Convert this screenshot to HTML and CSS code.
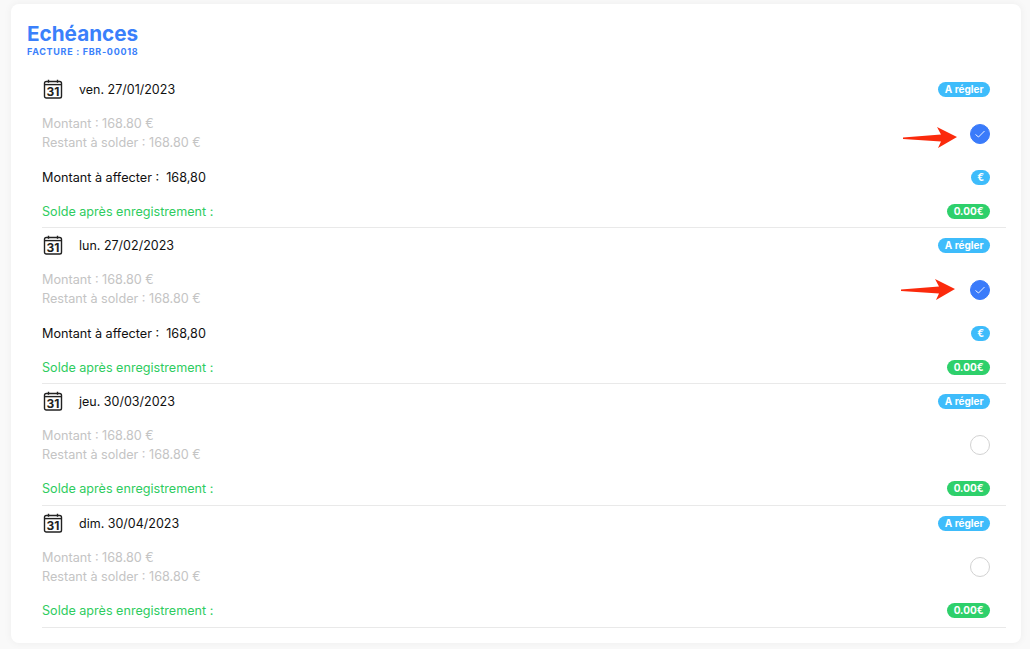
FILE: index.html
```html
<!DOCTYPE html>
<html lang="fr">
<head>
    <meta charset="UTF-8">
    <title>Echéances</title>
    <link rel="stylesheet" href="styles.css">
</head>
<body>
    <svg class="defs" width="0" height="0">
        <symbol id="cal" viewBox="0 0 20 20">
            <rect x="1.500" y="2.500" width="17" height="16.500" rx="1.800" fill="none" stroke="#222" stroke-width="1.400"/>
            <path d="M1.500 5.600h17" stroke="#222" stroke-width="1.400"/>
            <path d="M5.500 0.800v3M14.500 0.800v3" stroke="#222" stroke-width="1.400"/>
        </symbol>
        <symbol id="arrow" viewBox="0 0 56 22">
            <path d="M1 10.500 39 7.500 35 0 55 10 36 21 39 14.500 1 12z" fill="#fb2a0c"/>
        </symbol>
    </svg>

    <div class="card">
        <div class="head">
            <h1>Echéances</h1>
            <div class="sub">FACTURE : FBR-00018</div>
        </div>

        <div class="item">
            <div class="row date-row">
                <svg class="cal" viewBox="0 0 20 20"><use href="#cal"/><text x="10" y="17" text-anchor="middle" class="cal-num">31</text></svg>
                <span class="date">ven. 27/01/2023</span>
                <span class="badge blue">A régler</span>
            </div>
            <div class="row amounts">
                <div class="lines">
                    <div>Montant : 168.80 €</div>
                    <div>Restant à solder : 168.80 €</div>
                </div>
                <span class="check on">
                    <svg class="tick" viewBox="0 0 12 10"><path d="M1.500 5.500 4.500 8 10.500 2" fill="none" stroke="#fff" stroke-width="0.900"/></svg>
                    <svg class="arrow"><use href="#arrow"/></svg>
                </span>
            </div>
            <div class="row">
                <span class="assign">Montant à affecter :&nbsp; 168,80</span>
                <span class="badge blue euro">€</span>
            </div>
            <div class="row">
                <span class="solde">Solde après enregistrement :</span>
                <span class="badge green">0.00€</span>
            </div>
        </div>

        <div class="item">
            <div class="row date-row">
                <svg class="cal" viewBox="0 0 20 20"><use href="#cal"/><text x="10" y="17" text-anchor="middle" class="cal-num">31</text></svg>
                <span class="date">lun. 27/02/2023</span>
                <span class="badge blue">A régler</span>
            </div>
            <div class="row amounts">
                <div class="lines">
                    <div>Montant : 168.80 €</div>
                    <div>Restant à solder : 168.80 €</div>
                </div>
                <span class="check on">
                    <svg class="tick" viewBox="0 0 12 10"><path d="M1.500 5.500 4.500 8 10.500 2" fill="none" stroke="#fff" stroke-width="0.900"/></svg>
                    <svg class="arrow second"><use href="#arrow"/></svg>
                </span>
            </div>
            <div class="row">
                <span class="assign">Montant à affecter :&nbsp; 168,80</span>
                <span class="badge blue euro">€</span>
            </div>
            <div class="row">
                <span class="solde">Solde après enregistrement :</span>
                <span class="badge green">0.00€</span>
            </div>
        </div>

        <div class="item short">
            <div class="row date-row">
                <svg class="cal" viewBox="0 0 20 20"><use href="#cal"/><text x="10" y="17" text-anchor="middle" class="cal-num">31</text></svg>
                <span class="date">jeu. 30/03/2023</span>
                <span class="badge blue">A régler</span>
            </div>
            <div class="row amounts">
                <div class="lines">
                    <div>Montant : 168.80 €</div>
                    <div>Restant à solder : 168.80 €</div>
                </div>
                <span class="check"></span>
            </div>
            <div class="row">
                <span class="solde">Solde après enregistrement :</span>
                <span class="badge green">0.00€</span>
            </div>
        </div>

        <div class="item short">
            <div class="row date-row">
                <svg class="cal" viewBox="0 0 20 20"><use href="#cal"/><text x="10" y="17" text-anchor="middle" class="cal-num">31</text></svg>
                <span class="date">dim. 30/04/2023</span>
                <span class="badge blue">A régler</span>
            </div>
            <div class="row amounts">
                <div class="lines">
                    <div>Montant : 168.80 €</div>
                    <div>Restant à solder : 168.80 €</div>
                </div>
                <span class="check"></span>
            </div>
            <div class="row">
                <span class="solde">Solde après enregistrement :</span>
                <span class="badge green">0.00€</span>
            </div>
        </div>
    </div>
</body>
</html>
```

FILE: styles.css
```css
html, body {
    height: 100%;
}

body {
    margin: 0;
    padding: 4px 9px 0 11px;
    box-sizing: border-box;
    overflow: hidden;
    background: #f9f9f9;
    font-family: Inter, "Liberation Sans", sans-serif;
    font-size: 12.650px;
    color: #111;
}

.defs {
    position: absolute;
}

.cal-num {
    font-family: Inter, "Liberation Sans", sans-serif;
    font-size: 12px;
    font-weight: 700;
    fill: #222;
}

.card {
    height: 639px;
    box-sizing: border-box;
    padding: 0 15px 0 31px;
    background: #fff;
    border-radius: 8px;
    box-shadow: 0 0 8px rgba(0, 0, 0, 0.05);
}

.head {
    height: 68px;
    box-sizing: border-box;
    margin-left: -15px;
    padding-top: 18px;
}

h1 {
    margin: 0;
    font-size: 20.700px;
    line-height: 23px;
    font-weight: 700;
    color: #3a80fb;
}

.sub {
    margin-top: 1px;
    font-size: 9px;
    line-height: 11px;
    font-weight: 700;
    letter-spacing: 0.7px;
    color: #3a80fb;
}

.item {
    border-bottom: 1px solid #e9e9e9;
}

.row {
    display: flex;
    align-items: center;
    justify-content: space-between;
    height: 34px;
    box-sizing: border-box;
    padding-right: 16px;
}

.item .row:last-child {
    height: 33px;
    padding-top: 1px;
}

.item.short .row:last-child {
    padding-top: 0;
}

.date-row {
    justify-content: flex-start;
}

.date-row .badge {
    margin-left: auto;
}

.cal {
    width: 20px;
    height: 20px;
    margin: 0 16px 0 1px;
}

.date {
    font-size: 12.500px;
}

.amounts {
    height: 54px;
    padding-top: 1px;
}

.lines {
    line-height: 18.500px;
    color: #c4c4c4;
}

.solde {
    font-size: 12.600px;
    color: #2ecc60;
}

.badge {
    height: 15px;
    padding: 0 6.500px;
    border-radius: 8px;
    font-size: 10px;
    line-height: 15px;
    font-weight: 700;
    color: #fff;
}

.euro {
    padding: 0 6px;
}

.blue {
    background: #3ebcfb;
}

.green {
    background: #2ed06b;
}

.check {
    position: relative;
    width: 20px;
    height: 20px;
    box-sizing: border-box;
    border: 1px solid #d2d2d2;
    border-radius: 50%;
    background: #fff;
}

.short .check {
    margin-top: -1px;
}

.check.on {
    border-color: #3a7bfa;
    background: #3a7bfa;
}

.tick {
    position: absolute;
    left: 3px;
    top: 4px;
    width: 12px;
    height: 10px;
}

.arrow {
    position: absolute;
    left: -69px;
    top: 2px;
    width: 56px;
    height: 22px;
}

.arrow.second {
    left: -71px;
    top: -2px;
}
```
